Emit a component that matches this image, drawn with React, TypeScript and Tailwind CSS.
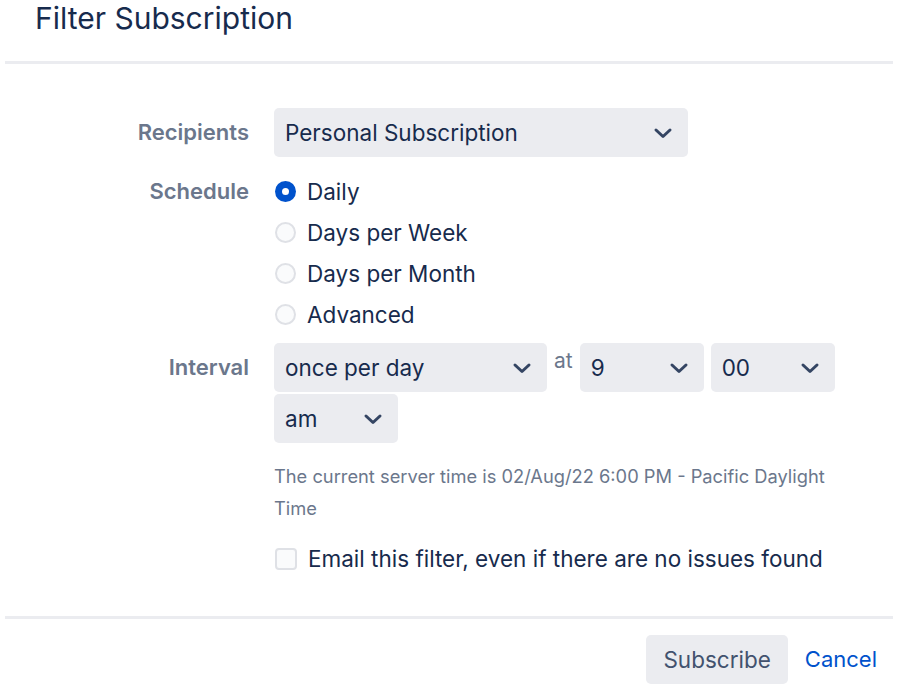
import { useState } from "react";

const font = { fontFamily: "Inter, 'Noto Sans', sans-serif" };

function Chevron() {
  return (
    <svg width="20" height="12" viewBox="0 0 20 12" className="shrink-0">
      <path
        d="M3 3 L10 9.5 L17 3"
        fill="none"
        stroke="#344563"
        strokeWidth="3"
        strokeLinecap="round"
        strokeLinejoin="round"
      />
    </svg>
  );
}

function Select({ value, width }: { value: string; width: string }) {
  return (
    <div
      className={`${width} h-[49px] rounded-[5px] bg-[#ebecf0] flex items-center justify-between pl-[11px] pr-[15px] text-[22.5px] text-[#172b4d]`}
    >
      <span>{value}</span>
      <Chevron />
    </div>
  );
}

function Radio({ checked }: { checked: boolean }) {
  if (checked) {
    return (
      <span className="w-[21px] h-[21px] rounded-full bg-[#0052cc] flex items-center justify-center shrink-0">
        <span className="w-[7px] h-[7px] rounded-full bg-white" />
      </span>
    );
  }
  return (
    <span className="w-[21px] h-[21px] rounded-full bg-[#fafbfc] border-2 border-[#dfe1e6] shrink-0" />
  );
}

export default function App() {
  const [schedule, setSchedule] = useState("Daily");
  const options = ["Daily", "Days per Week", "Days per Month", "Advanced"];

  return (
    <div style={font} className="w-[898px] h-[691px] bg-white px-[5px] overflow-hidden">
      <h1 className="pl-[30px] text-[30px] leading-[36px] text-[#172b4d] font-normal">
        Filter Subscription
      </h1>
      <div className="mt-[25px] h-[3px] bg-[#ebecf0]" />

      <div className="grid grid-cols-[244px_1fr] gap-x-[25px] mt-[44px]">
        <div className="h-[49px] flex items-center justify-end text-[22px] font-semibold text-[#6b778c]">
          Recipients
        </div>
        <div>
          <Select value="Personal Subscription" width="w-[414px]" />
        </div>

        <div className="mt-[14px] h-[41px] flex items-center justify-end text-[22px] font-semibold text-[#6b778c]">
          Schedule
        </div>
        <div className="mt-[14px] flex flex-col">
          {options.map((o) => (
            <label
              key={o}
              onClick={() => setSchedule(o)}
              className="h-[41px] flex items-center gap-[11px] pl-px text-[22.5px] text-[#172b4d] cursor-pointer"
            >
              <Radio checked={schedule === o} />
              <span>{o}</span>
            </label>
          ))}
        </div>

        <div className="mt-[8px] h-[49px] flex items-center justify-end text-[22px] font-semibold text-[#6b778c]">
          Interval
        </div>
        <div className="mt-[8px]">
          <div className="flex items-start">
            <Select value="once per day" width="w-[273px]" />
            <span className="mx-[7px] pt-[2px] text-[21px] text-[#6b778c]">at</span>
            <Select value="9" width="w-[124px]" />
            <div className="w-[7px]" />
            <Select value="00" width="w-[124px]" />
          </div>
          <div className="mt-[2px]">
            <Select value="am" width="w-[124px]" />
          </div>
          <p className="mt-[17px] w-[575px] text-[18.3px] leading-[32px] text-[#6b778c]">
            The current server time is 02/Aug/22 6:00 PM - Pacific Daylight Time
          </p>
          <label className="mt-[17px] h-[36px] flex items-center gap-[11px] pl-px text-[22.5px] text-[#172b4d]">
            <span className="w-[22px] h-[22px] rounded-[4px] bg-[#fafbfc] border-2 border-[#dfe1e6] shrink-0" />
            <span>Email this filter, even if there are no issues found</span>
          </label>
        </div>
      </div>

      <div className="mt-[39px] h-[3px] bg-[#ebecf0]" />
      <div className="mt-[16px] flex items-center justify-end pr-[16px] gap-[17px]">
        <button className="h-[49px] px-[17px] rounded-[5px] bg-[#ebecf0] text-[22.5px] text-[#42526e]">
          Subscribe
        </button>
        <button className="text-[22px] text-[#0052cc]">Cancel</button>
      </div>
    </div>
  );
}
